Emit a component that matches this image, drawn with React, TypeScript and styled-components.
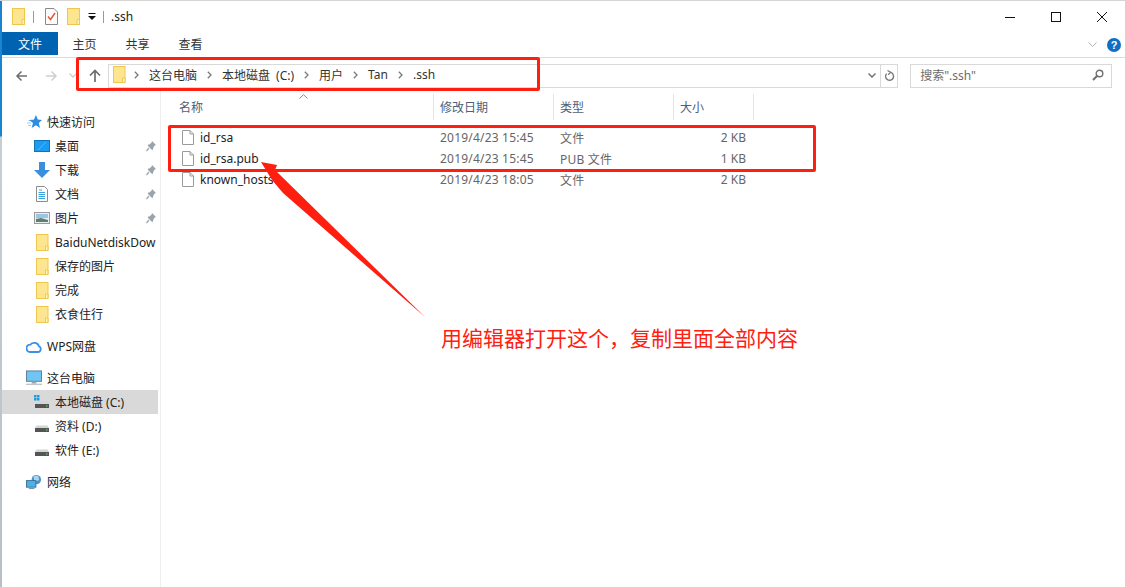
import React from 'react';
import styled, { createGlobalStyle } from 'styled-components';

const GlobalStyle = createGlobalStyle`
  html, body {
    margin: 0;
    padding: 0;
    background: #fff;
    overflow: hidden;
  }
  * {
    box-sizing: border-box;
  }
`;

const uiFont = `"Noto Sans", "Noto Sans CJK SC", sans-serif`;

const Window = styled.div`
  position: relative;
  width: 1125px;
  height: 587px;
  display: flex;
  flex-direction: column;
  background: #fff;
  border-top: 1px solid #d4d4d2;
  font-family: ${uiFont};
  font-size: 12px;
  color: #1a1a1a;
  overflow: hidden;
`;

const TopAccent = styled.div`
  position: absolute;
  left: 0;
  top: -1px;
  width: 605px;
  height: 1px;
  background: #0a78c8;
`;

const LeftEdge = styled.div`
  position: absolute;
  left: 0;
  top: 0;
  width: 2px;
  height: 100%;
  background: linear-gradient(#1a84d0 0, #1a84d0 135px, #c9ced2 136px, #b9bfc6 100%);
`;

const TitleBar = styled.div`
  height: 31px;
  flex: none;
  display: flex;
  align-items: center;
  padding-left: 12px;
`;

const TitleSep = styled.span<{ $gap: number }>`
  width: 1px;
  height: 12px;
  background: #9a9a9a;
  margin: 0 ${({ $gap }) => $gap}px;
`;

const QuickIcon = styled.span<{ $left: number }>`
  display: flex;
  margin-left: ${({ $left }) => $left}px;
`;

const TitleText = styled.span`
  font-size: 12px;
  color: #222;
`;

const WindowButtons = styled.div`
  margin-left: auto;
  display: flex;
  height: 100%;
`;

const WindowButton = styled.span`
  width: 46px;
  display: flex;
  align-items: center;
  justify-content: center;
`;

const RibbonTabs = styled.div`
  height: 26px;
  flex: none;
  display: flex;
  align-items: flex-start;
  padding-left: 2px;
  border-bottom: 1px solid #dadbdc;
`;

const FileTab = styled.div`
  width: 56px;
  height: 23px;
  background: #0063b1;
  color: #fff;
  display: flex;
  align-items: center;
  justify-content: center;
`;

const RibbonTab = styled.div`
  width: 53px;
  height: 23px;
  display: flex;
  align-items: center;
  justify-content: center;
  color: #333;
  &:first-of-type {
    margin-left: -1px;
  }
`;

const RibbonRight = styled.div`
  margin-left: auto;
  height: 23px;
  display: flex;
  align-items: center;
  gap: 10px;
  padding: 3px 4px 0 0;
`;

const AddressRow = styled.div`
  height: 32px;
  flex: none;
  display: flex;
  align-items: center;
  padding: 3px 13px 0 15px;
`;

const NavButton = styled.span<{ $width: number }>`
  width: ${({ $width }) => $width}px;
  display: flex;
  align-items: center;
`;

const AddressBox = styled.div`
  width: 791px;
  height: 24px;
  border: 1px solid #d9d9d9;
  display: flex;
  align-items: center;
  padding: 0 0 2px 4px;
`;

const Crumb = styled.span`
  color: #333;
  margin-right: 10px;
  word-spacing: 3px;
`;

const CrumbChevron = styled.span<{ $first?: boolean }>`
  display: flex;
  margin: 0 10px 0 ${({ $first }) => ($first ? 8 : 0)}px;
`;

const AddressEnd = styled.div`
  margin-left: auto;
  display: flex;
  align-items: center;
  height: calc(100% + 2px);
  margin-bottom: -2px;
`;

const RefreshButton = styled.span`
  width: 17px;
  height: 100%;
  margin-left: 4px;
  border-left: 1px solid #d9d9d9;
  display: flex;
  align-items: center;
  justify-content: center;
`;

const SearchBox = styled.div`
  width: 202px;
  height: 24px;
  margin-left: 12px;
  border: 1px solid #d9d9d9;
  display: flex;
  align-items: center;
  justify-content: space-between;
  padding: 0 7px 2px 9px;
  color: #6d6d6d;
`;

const Body = styled.div`
  flex: 1;
  display: flex;
  min-height: 0;
`;

const Sidebar = styled.nav`
  width: 161px;
  flex: none;
  border-right: 1px solid #eeeeee;
  padding: 20px 2px 0;
`;

const NavRow = styled.div<{ $child?: boolean; $active?: boolean; $gap?: number }>`
  width: 156px;
  height: 24px;
  display: flex;
  align-items: center;
  padding-left: ${({ $child }) => ($child ? 32 : 24)}px;
  margin-top: ${({ $gap }) => $gap ?? 0}px;
  background: ${({ $active }) => ($active ? '#d9d9d9' : 'transparent')};
  color: #222;
  white-space: nowrap;
`;

const NavIcon = styled.span`
  width: 16px;
  margin-right: 5px;
  flex: none;
  display: flex;
  align-items: center;
  justify-content: center;
`;

const PinSlot = styled.span`
  margin-left: auto;
  margin-right: 2px;
  display: flex;
`;

const FileArea = styled.main`
  flex: 1;
  min-width: 0;
`;

const HeaderRow = styled.div`
  display: grid;
  grid-template-columns: 273px 120px 120px 80px;
  height: 26px;
  position: relative;
  margin-top: 4px;
  color: #4c607a;
`;

const HeaderCell = styled.div<{ $left: number }>`
  display: flex;
  align-items: center;
  padding-left: ${({ $left }) => $left}px;
  border-right: 1px solid #e5e5e5;
`;

const SortCaret = styled.span`
  position: absolute;
  left: 138px;
  top: 0;
  display: flex;
`;

const FileRows = styled.div`
  padding-top: 7px;
`;

const FileRow = styled.div`
  display: grid;
  grid-template-columns: 273px 120px 120px 72px;
  height: 21px;
  align-items: center;
  color: #666;
`;

const NameCell = styled.div`
  display: flex;
  align-items: center;
  gap: 6px;
  padding-left: 21px;
  color: #222;
`;

const MetaCell = styled.div`
  padding-left: 6px;
  letter-spacing: 0.2px;
`;

const SizeCell = styled.div`
  text-align: right;
`;

const Highlight = styled.div<{ $x: number; $y: number; $w: number; $h: number }>`
  position: absolute;
  left: ${({ $x }) => $x}px;
  top: ${({ $y }) => $y}px;
  width: ${({ $w }) => $w}px;
  height: ${({ $h }) => $h}px;
  border: 3px solid #ff1f10;
  border-radius: 2px;
`;

const ArrowLayer = styled.svg`
  position: absolute;
  left: 0;
  top: 0;
`;

const Annotation = styled.div`
  position: absolute;
  left: 441px;
  top: 321px;
  font-family: "Noto Sans CJK SC", sans-serif;
  font-size: 21px;
  line-height: 30px;
  color: #ff2010;
  white-space: nowrap;
`;

const FolderIcon = () => (
  <svg width="14" height="17" viewBox="0 0 14 17">
    <rect x="0.5" y="0.5" width="12" height="16" fill="#fde68f" stroke="#eec74c" />
    <path d="M10 16.5V11.5H12.5V16.5Z" fill="#fff3c2" stroke="#eec74c" />
  </svg>
);

const NavFolder = () => (
  <svg width="13" height="17" viewBox="0 0 13 17">
    <rect x="0.5" y="0.5" width="11.5" height="16" fill="#fde68f" stroke="#eec74c" />
    <path d="M9.5 16.5V12H12V16.5Z" fill="#fff3c2" stroke="#eec74c" />
  </svg>
);

const PropertiesIcon = () => (
  <svg width="13" height="17" viewBox="0 0 13 17">
    <path d="M.5.5H9L12.5 4V16.5H.5Z" fill="#fbfbfb" stroke="#8a8a8a" />
    <path d="M3 8.5L5.5 11.5L10 5" fill="none" stroke="#e3562a" strokeWidth="1.4" />
  </svg>
);

const CustomizeIcon = () => (
  <svg width="8" height="8" viewBox="0 0 8 8">
    <rect x="0.5" y="0" width="7" height="1" fill="#111" />
    <path d="M0 3H8L4 7Z" fill="#111" />
  </svg>
);

const MinimizeIcon = () => (
  <svg width="10" height="10" viewBox="0 0 10 10">
    <rect x="0" y="5" width="10" height="1" fill="#111" />
  </svg>
);

const MaximizeIcon = () => (
  <svg width="10" height="10" viewBox="0 0 10 10">
    <rect x="0.5" y="0.5" width="9" height="9" fill="none" stroke="#111" />
  </svg>
);

const CloseIcon = () => (
  <svg width="10" height="10" viewBox="0 0 10 10">
    <path d="M0 0L10 10M10 0L0 10" stroke="#111" />
  </svg>
);

const RibbonChevron = () => (
  <svg width="9" height="6" viewBox="0 0 9 6">
    <path d="M.5.5L4.5 4.5L8.5.5" fill="none" stroke="#aab0b5" />
  </svg>
);

const HelpIcon = () => (
  <svg width="14" height="14" viewBox="0 0 14 14">
    <circle cx="7" cy="7" r="7" fill="#0f6fc6" />
    <text x="7" y="11" textAnchor="middle" fontSize="11" fontWeight="700" fill="#fff" fontFamily="Liberation Sans">?</text>
  </svg>
);

const NavArrow = ({ color, flip }: { color: string; flip?: boolean }) => (
  <svg width="13" height="12" viewBox="0 0 13 12" style={flip ? { transform: 'scaleX(-1)' } : undefined}>
    <path d="M12 6H2M6.5 1.5L2 6L6.5 10.5" fill="none" stroke={color} strokeWidth="1.5" />
  </svg>
);

const DownChevron = ({ color }: { color: string }) => (
  <svg width="8" height="5" viewBox="0 0 8 5">
    <path d="M.5.5L4 4L7.5.5" fill="none" stroke={color} strokeWidth="1.4" />
  </svg>
);

const UpArrow = () => (
  <svg width="12" height="13" viewBox="0 0 12 13">
    <path d="M6 13V2M1 6.5L6 1.5L11 6.5" fill="none" stroke="#6d6d6d" strokeWidth="1.7" />
  </svg>
);

const CrumbArrow = () => (
  <svg width="5" height="8" viewBox="0 0 5 8">
    <path d="M.8.8L4 4L.8 7.2" fill="none" stroke="#7a7a7a" strokeWidth="1.3" />
  </svg>
);

const RefreshIcon = () => (
  <svg width="11" height="12" viewBox="0 0 11 12">
    <path d="M6.5 2.4A4 4 0 1 1 2.6 3.6" fill="none" stroke="#7a7a7a" strokeWidth="1.4" />
    <path d="M3.5.5L6.8 2.4L4 4.8" fill="none" stroke="#7a7a7a" strokeWidth="1.2" />
  </svg>
);

const SearchIcon = () => (
  <svg width="12" height="12" viewBox="0 0 12 12">
    <circle cx="7.5" cy="4.5" r="3.3" fill="none" stroke="#6f6f6f" strokeWidth="1.4" />
    <path d="M5 7L1 11" stroke="#6f6f6f" strokeWidth="2" />
  </svg>
);

const StarIcon = () => (
  <svg width="16" height="14" viewBox="-1 0 16 14">
    <path d="M9 0L10.8 4.6L15 5L11.8 8L13 13L9 10.3L4.6 13L6 8L3.5 6H1L4 4.8H6.8Z" fill="#2f8de0" />
    <path d="M0 8H4M1 10.5H4" stroke="#9ccbf2" />
  </svg>
);

const DesktopIcon = () => (
  <svg width="16" height="12" viewBox="0 0 16 12">
    <rect x="0.5" y="0.5" width="15" height="11" fill="#1c9bf0" stroke="#1273b8" />
    <path d="M4 10L12 2" stroke="#54b6f6" />
  </svg>
);

const DownloadIcon = () => (
  <svg width="16" height="16" viewBox="0 0 16 16">
    <path d="M5 0H11V8H16L8 16L0 8H5Z" fill="#3a8fdc" />
  </svg>
);

const DocumentIcon = () => (
  <svg width="12" height="16" viewBox="0 0 12 16">
    <path d="M.5.5H8.5L11.5 3.5V15.5H.5Z" fill="#fff" stroke="#8d8d8d" />
    <path d="M3 4H6M2.5 6.5H9M2.5 8.5H9M2.5 10.5H9M2.5 12.5H9" stroke="#38a3e0" />
  </svg>
);

const PictureIcon = () => (
  <svg width="16" height="12" viewBox="0 0 16 12">
    <rect x="0.5" y="0.5" width="15" height="11" fill="#e8f0f6" stroke="#9a9a9a" />
    <rect x="2" y="2" width="12" height="4" fill="#9cc4e4" />
    <path d="M2 10V7L7 6L14 8V10Z" fill="#5d7f6e" />
  </svg>
);

const PinIcon = () => (
  <svg width="10" height="11" viewBox="0 0 10 11">
    <path d="M6 0L10 4L8.6 4.6L7 7.2V8.6L6 9L1.6 4.4L2.4 3.4H3.4L5.6 1.4Z" fill="#9aa3ab" />
    <path d="M3 7L.5 10" stroke="#9aa3ab" strokeWidth="1.2" />
  </svg>
);

const CloudIcon = () => (
  <svg width="16" height="13" viewBox="0 0 16 13">
    <path d="M4 12H12A3 3 0 0 0 13 6.3A5 5 0 0 0 4.4 4.6A3.7 3.7 0 0 0 4 12Z" fill="none" stroke="#3b8fe6" strokeWidth="1.8" />
  </svg>
);

const ThisPcIcon = () => (
  <svg width="16" height="16" viewBox="0 0 17 16">
    <rect x="0.5" y="0.5" width="16" height="11" fill="#6fc6f5" stroke="#5a7c90" />
    <rect x="6" y="12" width="5" height="2" fill="#9aa7ae" />
    <rect x="0" y="14" width="17" height="1.5" fill="#bfc6ca" />
  </svg>
);

const DriveIcon = ({ system }: { system?: boolean }) => (
  <svg width="16" height="14" viewBox="0 0 16 14">
    {system && (
      <g fill="#1e9be0">
        <rect x="0" y="0" width="2.5" height="2.5" />
        <rect x="3" y="0" width="2.5" height="2.5" />
        <rect x="0" y="3" width="2.5" height="2.5" />
        <rect x="3" y="3" width="2.5" height="2.5" />
      </g>
    )}
    <path d="M2.5 6.5H13.5L15 9H1Z" fill="#d5d5d5" />
    <rect x="1" y="9" width="14" height="4" fill="#555" />
    <rect x="12" y="10.5" width="1.5" height="1" fill="#6ee06e" />
  </svg>
);

const NetworkIcon = () => (
  <svg width="16" height="16" viewBox="0 0 17 16">
    <circle cx="11" cy="5.5" r="5" fill="#4d93c9" />
    <path d="M8 2L13 1L14 6L9 8Z" fill="#a8d4ee" />
    <rect x="0.5" y="6.5" width="10" height="7" fill="#4cb0ec" stroke="#3d6f90" />
    <rect x="3" y="14" width="6" height="1.5" fill="#7a97a8" />
  </svg>
);

const PlainFileIcon = () => (
  <svg width="12" height="15" viewBox="0 0 12 15">
    <path d="M.5.5H8L11.5 4V14.5H.5Z" fill="#fff" stroke="#9b9b9b" />
    <path d="M8 .5V4H11.5" fill="none" stroke="#9b9b9b" />
  </svg>
);

const SortUp = () => (
  <svg width="9" height="5" viewBox="0 0 9 5">
    <path d="M.5 4.5L4.5.7L8.5 4.5" fill="none" stroke="#8a8a8a" />
  </svg>
);

const pinned = [
  { label: '桌面', icon: <DesktopIcon /> },
  { label: '下载', icon: <DownloadIcon /> },
  { label: '文档', icon: <DocumentIcon /> },
  { label: '图片', icon: <PictureIcon /> },
];

const folders = ['BaiduNetdiskDow', '保存的图片', '完成', '衣食住行'];

const files = [
  { name: 'id_rsa', date: '2019/4/23 15:45', type: '文件', size: '2 KB' },
  { name: 'id_rsa.pub', date: '2019/4/23 15:45', type: 'PUB 文件', size: '1 KB' },
  { name: 'known_hosts', date: '2019/4/23 18:05', type: '文件', size: '2 KB' },
];

const crumbs = ['这台电脑', '本地磁盘 (C:)', '用户', 'Tan', '.ssh'];

export default function App() {
  return (
    <Window>
      <GlobalStyle />
      <TopAccent />
      <TitleBar>
        <FolderIcon />
        <TitleSep $gap={7} />
        <QuickIcon $left={4}><PropertiesIcon /></QuickIcon>
        <QuickIcon $left={9}><FolderIcon /></QuickIcon>
        <QuickIcon $left={7}><CustomizeIcon /></QuickIcon>
        <TitleSep $gap={7} />
        <QuickIcon $left={0}><TitleText>.ssh</TitleText></QuickIcon>
        <WindowButtons>
          <WindowButton><MinimizeIcon /></WindowButton>
          <WindowButton><MaximizeIcon /></WindowButton>
          <WindowButton><CloseIcon /></WindowButton>
        </WindowButtons>
      </TitleBar>

      <RibbonTabs>
        <FileTab>文件</FileTab>
        <RibbonTab>主页</RibbonTab>
        <RibbonTab>共享</RibbonTab>
        <RibbonTab>查看</RibbonTab>
        <RibbonRight>
          <RibbonChevron />
          <HelpIcon />
        </RibbonRight>
      </RibbonTabs>

      <AddressRow>
        <NavButton $width={30}><NavArrow color="#6d6d6d" /></NavButton>
        <NavButton $width={24}><NavArrow color="#cfcfcf" flip /></NavButton>
        <NavButton $width={20}><DownChevron color="#cfcfcf" /></NavButton>
        <NavButton $width={19}><UpArrow /></NavButton>
        <AddressBox>
          <NavFolder />
          {crumbs.map((crumb, i) => (
            <React.Fragment key={crumb}>
              <CrumbChevron $first={i === 0}><CrumbArrow /></CrumbChevron>
              <Crumb>{crumb}</Crumb>
            </React.Fragment>
          ))}
          <AddressEnd>
            <DownChevron color="#6d6d6d" />
            <RefreshButton><RefreshIcon /></RefreshButton>
          </AddressEnd>
        </AddressBox>
        <SearchBox>
          <span>搜索".ssh"</span>
          <SearchIcon />
        </SearchBox>
      </AddressRow>

      <Body>
        <Sidebar>
          <NavRow>
            <NavIcon><StarIcon /></NavIcon>
            快速访问
          </NavRow>
          {pinned.map((item) => (
            <NavRow $child key={item.label}>
              <NavIcon>{item.icon}</NavIcon>
              {item.label}
              <PinSlot><PinIcon /></PinSlot>
            </NavRow>
          ))}
          {folders.map((name) => (
            <NavRow $child key={name}>
              <NavIcon><NavFolder /></NavIcon>
              {name}
            </NavRow>
          ))}
          <NavRow $gap={8}>
            <NavIcon><CloudIcon /></NavIcon>
            WPS网盘
          </NavRow>
          <NavRow $gap={8}>
            <NavIcon><ThisPcIcon /></NavIcon>
            这台电脑
          </NavRow>
          <NavRow $child $active>
            <NavIcon><DriveIcon system /></NavIcon>
            本地磁盘 (C:)
          </NavRow>
          <NavRow $child>
            <NavIcon><DriveIcon /></NavIcon>
            资料 (D:)
          </NavRow>
          <NavRow $child>
            <NavIcon><DriveIcon /></NavIcon>
            软件 (E:)
          </NavRow>
          <NavRow $gap={8}>
            <NavIcon><NetworkIcon /></NavIcon>
            网络
          </NavRow>
        </Sidebar>

        <FileArea>
          <HeaderRow>
            <SortCaret><SortUp /></SortCaret>
            <HeaderCell $left={18}>名称</HeaderCell>
            <HeaderCell $left={6}>修改日期</HeaderCell>
            <HeaderCell $left={6}>类型</HeaderCell>
            <HeaderCell $left={6}>大小</HeaderCell>
          </HeaderRow>
          <FileRows>
            {files.map((file) => (
              <FileRow key={file.name}>
                <NameCell><PlainFileIcon />{file.name}</NameCell>
                <MetaCell>{file.date}</MetaCell>
                <MetaCell>{file.type}</MetaCell>
                <SizeCell>{file.size}</SizeCell>
              </FileRow>
            ))}
          </FileRows>
        </FileArea>
      </Body>

      <LeftEdge />
      <Highlight $x={76} $y={56} $w={464} $h={34} />
      <Highlight $x={168} $y={124} $w={648} $h={47} />
      <ArrowLayer width="1125" height="587" viewBox="0 0 1125 587">
        <polygon points="261,161 277,164 275,169 425,316 283,192 272,179" fill="#ff1f10" />
      </ArrowLayer>
      <Annotation>用编辑器打开这个，复制里面全部内容</Annotation>
    </Window>
  );
}
